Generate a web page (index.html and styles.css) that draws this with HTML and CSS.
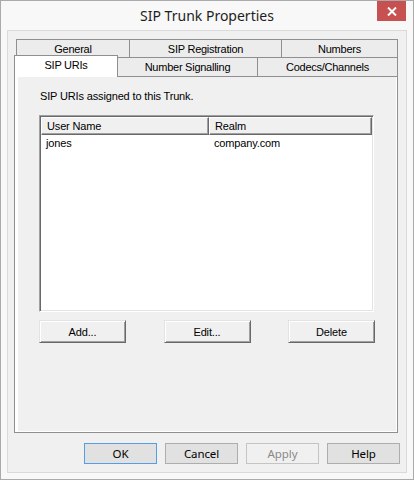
FILE: index.html
```html
<!DOCTYPE html>
<html lang="en">
<head>
  <meta charset="UTF-8">
  <meta name="viewport" content="width=device-width, initial-scale=1.0">
  <title>SIP Trunk Properties</title>
  <link rel="stylesheet" href="styles.css">
</head>
<body>
  <div class="window">
    <div class="titlebar">
      <span class="title">SIP Trunk Properties</span>
      <button class="close-btn" aria-label="Close">
        <svg width="10" height="9" viewBox="0 0 10 9">
          <path d="M1 0.5 L9 8.5 M9 0.5 L1 8.5" stroke="#fff" stroke-width="2" fill="none"/>
        </svg>
      </button>
    </div>

    <div class="client">
      <div class="tabs">
        <div class="tab-row back">
          <div class="tab tab-general">General</div>
          <div class="tab tab-registration">SIP Registration</div>
          <div class="tab tab-numbers">Numbers</div>
        </div>
        <div class="tab-row front">
          <div class="tab tab-uris selected">SIP URIs</div>
          <div class="tab tab-signalling">Number Signalling</div>
          <div class="tab tab-codecs">Codecs/Channels</div>
        </div>

        <div class="tab-panel">
          <div class="page">
            <div class="page-label">SIP URIs assigned to this Trunk.</div>

            <div class="listview">
              <div class="lv-header">
                <div class="lv-col col-user">User Name</div>
                <div class="lv-col col-realm">Realm</div>
              </div>
              <div class="lv-row">
                <div class="lv-cell col-user">jones</div>
                <div class="lv-cell col-realm">company.com</div>
              </div>
            </div>

            <div class="list-buttons">
              <button class="classic-btn">Add...</button>
              <button class="classic-btn">Edit...</button>
              <button class="classic-btn">Delete</button>
            </div>
          </div>
        </div>
      </div>

      <div class="dialog-buttons">
        <button class="btn default">OK</button>
        <button class="btn">Cancel</button>
        <button class="btn" disabled>Apply</button>
        <button class="btn">Help</button>
      </div>
    </div>
  </div>
</body>
</html>
```

FILE: styles.css
```css
body {
  margin: 0;
  background: #fff;
  font-family: 'Liberation Sans', Arial, sans-serif;
  font-size: 11px;
  letter-spacing: -0.15px;
  color: #000;
}

button {
  font-family: inherit;
  letter-spacing: inherit;
  padding: 0;
  margin: 0;
  cursor: default;
}

/* window frame */
.window {
  width: 414px;
  height: 480px;
  box-sizing: border-box;
  border: 1px solid #aaaaaa;
  background: #f8f8f8;
}

.titlebar {
  position: relative;
  height: 29px;
  line-height: 29px;
  text-align: center;
}

.title {
  font-family: 'Noto Sans', sans-serif;
  font-size: 14px;
  letter-spacing: 0;
  color: #1e1e1e;
}

.close-btn {
  position: absolute;
  top: 0;
  right: 7px;
  width: 29px;
  height: 20px;
  border: none;
  background: #c75050;
  display: flex;
  align-items: center;
  justify-content: center;
}

.close-btn svg {
  display: block;
}

.client {
  height: 443px;
  box-sizing: border-box;
  margin: 0 6px;
  padding: 8px 6px 0 6px;
  border: 1px solid #dadada;
  background: #f0f0f0;
}

/* tab control */
.tabs {
  width: 384px;
}

.tab-row {
  display: flex;
}

.tab-row.back {
  height: 18px;
  padding-left: 2px;
}

.tab-row.front {
  height: 19px;
  align-items: flex-end;
}

.tab {
  box-sizing: border-box;
  height: 100%;
  margin-right: -1px;
  border: 1px solid #8e8f8f;
  border-bottom: none;
  background: #ececec;
  text-align: center;
  line-height: 18px;
  white-space: nowrap;
  letter-spacing: -0.25px;
}

.tab-row.front .tab {
  height: 19px;
}

.tab-general { width: 114px; }
.tab-registration { width: 153px; }
.tab-numbers { width: 117px; }
.tab-uris { width: 104px; }
.tab-signalling { width: 141px; }
.tab-codecs { width: 141px; }

.tab-row.front .tab.selected {
  position: relative;
  z-index: 1;
  height: 22px;
  margin-bottom: -1px;
  background: #fff;
  line-height: 19px;
}

.tab-panel {
  height: 357px;
  box-sizing: border-box;
  padding: 0 1px 1px 3px;
  border: 1px solid #8e8f8f;
  background: #fff;
}

.page {
  height: 100%;
  padding-top: 13px;
  box-sizing: border-box;
  background: #f0f0f0;
}

.page-label {
  padding-left: 22px;
  line-height: 13px;
}

/* list view */
.listview {
  width: 335px;
  height: 197px;
  box-sizing: border-box;
  margin: 12px 0 0 21px;
  border: 1px solid;
  border-color: #a0a0a0 #fff #fff #a0a0a0;
  box-shadow: inset 1px 1px 0 #696969, inset -1px -1px 0 #e3e3e3;
  padding: 1px;
  background: #fff;
}

.lv-header {
  display: flex;
  height: 18px;
}

.lv-col {
  box-sizing: border-box;
  height: 18px;
  line-height: 16px;
  padding-left: 5px;
  background: #f0f0f0;
  border-top: 1px solid #fff;
  border-left: 1px solid #fff;
  border-right: 1px solid #696969;
  border-bottom: 1px solid #696969;
  box-shadow: inset -1px -1px 0 #a0a0a0;
}

.col-user { width: 168px; }
.col-realm { width: 163px; }

.lv-row {
  display: flex;
  height: 16px;
  line-height: 16px;
}

.lv-cell {
  padding-left: 5px;
  box-sizing: border-box;
}

.list-buttons {
  display: flex;
  justify-content: space-between;
  width: 336px;
  margin: 8px 0 0 21px;
}

.classic-btn {
  width: 87px;
  height: 23px;
  box-sizing: border-box;
  font-size: 11px;
  background: #f0f0f0;
  border: 1px solid;
  border-color: #e3e3e3 #696969 #696969 #e3e3e3;
  box-shadow: inset 1px 1px 0 #fff, inset -1px -1px 0 #a0a0a0;
}

/* OK / Cancel row */
.dialog-buttons {
  display: flex;
  justify-content: flex-end;
  gap: 8px;
  margin-top: 10px;
}

.btn {
  width: 73px;
  height: 21px;
  box-sizing: border-box;
  font-family: 'Noto Sans', sans-serif;
  font-size: 11.5px;
  letter-spacing: -0.1px;
  color: #000;
  background: #e1e1e1;
  border: 1px solid #adadad;
}

.btn.default {
  border-color: #569de5;
}

.btn:disabled {
  background: #f0f0f0;
  border-color: #c4c4c4;
  color: #8a8a8a;
}
```
